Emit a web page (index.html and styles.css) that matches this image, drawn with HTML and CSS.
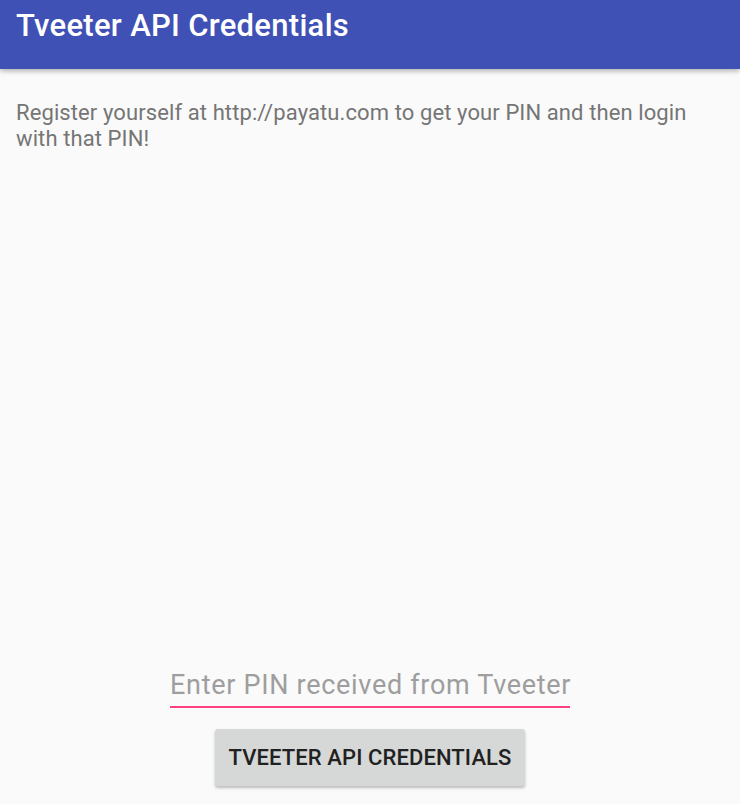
FILE: index.html
```html
<!DOCTYPE html>
<html>
<head>
<meta charset="utf-8">
<link rel="stylesheet" href="styles.css">
</head>
<body>
<div class="app">
  <header class="appbar"><h1 class="title">Tveeter API Credentials</h1></header>
  <main class="content">
    <p class="info">Register yourself at http://payatu.com to get your PIN and then login with that PIN!</p>
    <div class="spacer"></div>
    <div class="form">
      <div class="field"><span class="placeholder">Enter PIN received from Tveeter</span></div>
      <button class="btn">TVEETER API CREDENTIALS</button>
    </div>
  </main>
</div>
</body>
</html>
```
FILE: styles.css
```css
html, body { margin: 0; padding: 0; background: #fafafa; }
body { font-family: Roboto, "Noto Sans", sans-serif; }
.app { display: flex; flex-direction: column; height: 804px; overflow: hidden; }
.appbar {
  height: 69px; background: #3f51b5; flex: none;
  box-shadow: 0 2px 5px rgba(0,0,0,0.3);
  position: relative; z-index: 1;
  display: flex; align-items: flex-start; padding: 0 16px;
}
.title { margin: 7px 0 0; color: #fff; font-size: 31px; font-weight: 500; line-height: 38px; letter-spacing: 0.3px; }
.content { flex: 1; display: flex; flex-direction: column; padding: 0 16px; }
.info { margin: 31px 0 0; max-width: 690px; color: #757575; font-size: 22px; line-height: 26px; letter-spacing: 0.1px; }
.spacer { flex: 1; }
.form { display: flex; flex-direction: column; align-items: center; padding-bottom: 18px; }
.field { width: 400px; border-bottom: 2px solid #ff4081; padding-bottom: 6px; text-align: center; }
.placeholder { color: #9e9e9e; font-size: 27px; line-height: 30px; letter-spacing: 0.7px; white-space: nowrap; }
.btn {
  margin-top: 21px; width: 310px; height: 57px; border: 0; border-radius: 3px;
  background: #d6d7d7; color: #212121; font-family: Roboto, sans-serif;
  font-size: 22px; font-weight: 500; letter-spacing: 0.1px; box-shadow: 0 2px 3px rgba(0,0,0,0.25);
}
```
